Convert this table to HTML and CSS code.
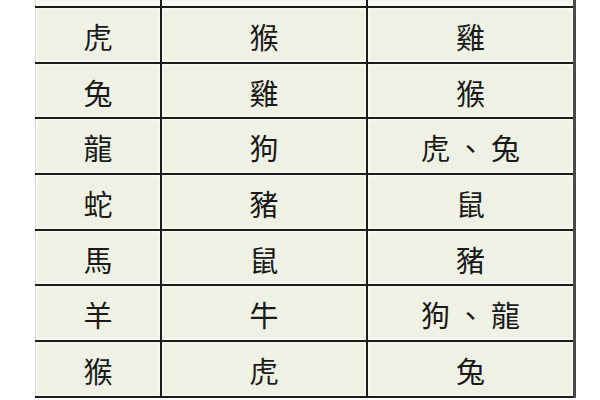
FILE: index.html
```html
<!DOCTYPE html>
<html lang="zh-Hant">
<head>
<meta charset="utf-8">
<link rel="stylesheet" href="styles.css">
</head>
<body>
<div class="frame">
<table class="zodiac">
  <tr class="head"><td></td><td></td><td></td></tr>
  <tr><td>虎</td><td>猴</td><td>雞</td></tr>
  <tr><td>兔</td><td>雞</td><td>猴</td></tr>
  <tr><td>龍</td><td>狗</td><td>虎<span class="sep">、</span>兔</td></tr>
  <tr><td>蛇</td><td>豬</td><td>鼠</td></tr>
  <tr><td>馬</td><td>鼠</td><td>豬</td></tr>
  <tr><td>羊</td><td>牛</td><td>狗<span class="sep">、</span>龍</td></tr>
  <tr><td>猴</td><td>虎</td><td>兔</td></tr>
</table>
</div>
</body>
</html>
```
FILE: styles.css
```css
html, body {
  margin: 0;
  padding: 0;
  background: #ffffff;
}
.frame {
  width: 600px;
  height: 400px;
  overflow: hidden;
  padding-left: 35px;
  box-sizing: border-box;
}
.zodiac {
  border-collapse: collapse;
  width: 541px;
  table-layout: fixed;
  font-family: "Noto Sans CJK TC", "Noto Sans CJK SC", sans-serif;
  font-size: 29px;
  color: #1a1a1a;
}
.zodiac td {
  background: #eef1e4;
  border: 2px solid #1c1c1c;
  text-align: center;
  vertical-align: middle;
  padding: 3px 0 0 0;
  height: 50.7px;
  line-height: 1;
  box-shadow: inset 0 0 0 2px #f6f8f0;
}
.zodiac td:first-child {
  width: 124px;
  border-left: 1px solid #d8dbd0;
}
.zodiac td:nth-child(2) {
  width: 204px;
}
.zodiac td:last-child {
  border-right: 3px solid #4a4a4a;
}
.zodiac tr.head td {
  height: 6px;
  padding: 0;
  background: #f6f8f0;
  border-top: none;
}
.sep {
  margin: 0 6px;
}
```
